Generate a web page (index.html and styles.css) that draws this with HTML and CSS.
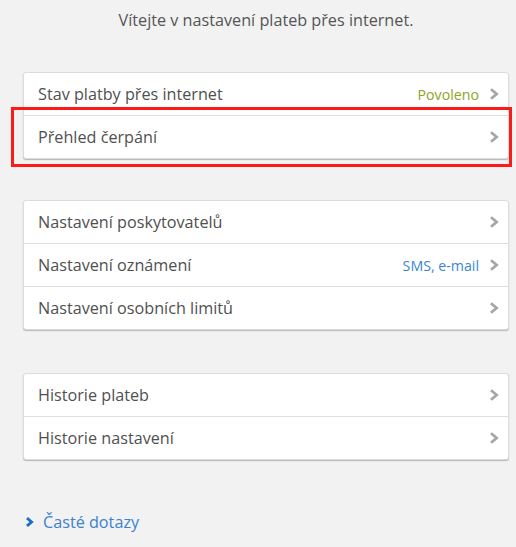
FILE: index.html
```html
<!DOCTYPE html>
<html lang="cs">
<head>
<meta charset="utf-8">
<title>Nastavení plateb přes internet</title>
<link rel="stylesheet" href="styles.css">
</head>
<body>
<div class="page">
  <p class="intro">Vítejte v nastavení plateb přes internet.</p>

  <div class="card">
    <a class="row" href="#"><span class="label">Stav platby přes internet</span><span class="value ok">Povoleno</span><svg class="chev" width="10" height="12" viewBox="0 0 10 12"><path d="M2 1.3 L7.6 6 L2 10.7" fill="none" stroke="#a6a6a6" stroke-width="2.8"/></svg></a>
    <a class="row marked" href="#"><span class="label">Přehled čerpání</span><svg class="chev" width="10" height="12" viewBox="0 0 10 12"><path d="M2 1.3 L7.6 6 L2 10.7" fill="none" stroke="#a6a6a6" stroke-width="2.8"/></svg><span class="highlight"></span></a>
  </div>

  <div class="card">
    <a class="row" href="#"><span class="label">Nastavení poskytovatelů</span><svg class="chev" width="10" height="12" viewBox="0 0 10 12"><path d="M2 1.3 L7.6 6 L2 10.7" fill="none" stroke="#a6a6a6" stroke-width="2.8"/></svg></a>
    <a class="row" href="#"><span class="label">Nastavení oznámení</span><span class="value info">SMS, e-mail</span><svg class="chev" width="10" height="12" viewBox="0 0 10 12"><path d="M2 1.3 L7.6 6 L2 10.7" fill="none" stroke="#a6a6a6" stroke-width="2.8"/></svg></a>
    <a class="row" href="#"><span class="label">Nastavení osobních limitů</span><svg class="chev" width="10" height="12" viewBox="0 0 10 12"><path d="M2 1.3 L7.6 6 L2 10.7" fill="none" stroke="#a6a6a6" stroke-width="2.8"/></svg></a>
  </div>

  <div class="card card-wide-gap">
    <a class="row" href="#"><span class="label">Historie plateb</span><svg class="chev" width="10" height="12" viewBox="0 0 10 12"><path d="M2 1.3 L7.6 6 L2 10.7" fill="none" stroke="#a6a6a6" stroke-width="2.8"/></svg></a>
    <a class="row" href="#"><span class="label">Historie nastavení</span><svg class="chev" width="10" height="12" viewBox="0 0 10 12"><path d="M2 1.3 L7.6 6 L2 10.7" fill="none" stroke="#a6a6a6" stroke-width="2.8"/></svg></a>
  </div>

  <a class="faq" href="#"><svg class="faq-chev" width="9" height="12" viewBox="0 0 9 12"><path d="M2 2 L6.5 6 L2 10" fill="none" stroke="#1c6fc4" stroke-width="3"/></svg><span>Časté dotazy</span></a>
</div>
</body>
</html>
```
FILE: styles.css
```css
html, body {
  margin: 0;
  padding: 0;
  background: #f2f2f2;
}
body {
  font-family: "Open Sans", "Noto Sans", sans-serif;
  font-size: 16.2px;
  color: #555;
}
.page {
  width: 486px;
  margin-left: 23px;
  padding-top: 9px;
  display: flex;
  flex-direction: column;
}
.intro {
  margin: 0;
  text-align: center;
  line-height: 22px;
  color: #555;
}
.card {
  margin-top: 41px;
  background: #fff;
  border: 1px solid #dcdcdc;
  border-radius: 3px;
  box-shadow: 0 1px 1px rgba(0,0,0,0.25);
  display: flex;
  flex-direction: column;
}
.card.card-wide-gap {
  margin-top: 43px;
}
.row {
  position: relative;
  display: flex;
  align-items: center;
  height: 42px;
  padding: 0 9px 0 14px;
  text-decoration: none;
  color: #505050;
}
.row + .row {
  border-top: 1px solid #dedede;
}
.label {
  flex: 1;
}
.value {
  margin-right: 10px;
  font-size: 14.2px;
}
.value.ok {
  color: #8ba51f;
}
.value.info {
  color: #3a86d4;
}
.chev {
  display: block;
}
.highlight {
  position: absolute;
  left: -13px;
  right: -4px;
  top: -9px;
  bottom: -9px;
  border: 3px solid #ff1a1a;
  pointer-events: none;
}
.faq {
  margin-top: 51px;
  margin-left: 2px;
  display: flex;
  align-items: center;
  gap: 9px;
  text-decoration: none;
  color: #3a82d0;
  line-height: 22px;
}
.faq-chev {
  display: block;
}
```
